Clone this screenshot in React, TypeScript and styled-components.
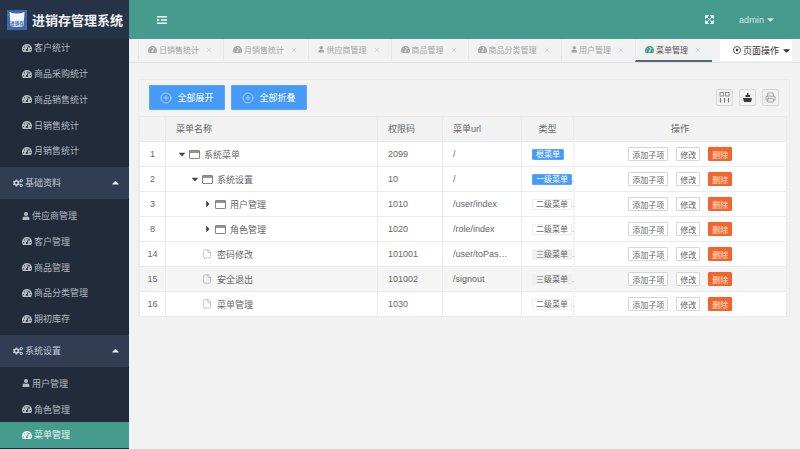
import React from 'react'
import styled, { createGlobalStyle } from 'styled-components'
import { FaCaretDown, FaCaretRight, FaCaretUp, FaCogs, FaTachometerAlt, FaUser, FaRegDotCircle } from 'react-icons/fa'
import { CirclePlus, Printer, File, X } from 'lucide-react'

const Global = createGlobalStyle`
	html, body {
		margin: 0;
		padding: 0;
		height: 100%;
		overflow: hidden;
		background: #f2f2f2;
		font-family: 'Liberation Sans', 'Noto Sans CJK SC', sans-serif;
	}
	* {
		box-sizing: border-box;
	}
`

const Page = styled.div`
	display: flex;
	width: 800px;
	height: 449px;
	overflow: hidden;
`

const Sidebar = styled.aside`
	flex: 0 0 129px;
	background: #212b3a;
	overflow: hidden;
	display: flex;
	flex-direction: column;
`

const Brand = styled.div`
	flex: 0 0 39px;
	display: flex;
	align-items: center;
	gap: 5px;
	padding-left: 7px;
	background: #263246;
	color: #eef1f4;
	font-size: 13px;
	font-weight: 700;
	white-space: nowrap;
	position: relative;
	z-index: 1;
`

const MenuScroll = styled.nav`
	margin-top: -4px;
`

const SubList = styled.div`
	padding: 0 0 3px;
	&:not(:first-child) {
		padding-top: 4px;
	}
`

const Item = styled.div<{ $active?: boolean }>`
	height: 25.75px;
	display: flex;
	align-items: center;
	gap: 2px;
	padding-left: 22px;
	font-size: 9px;
	color: ${(p) => (p.$active ? '#eef5f3' : '#b4bac2')};
	background: ${(p) => (p.$active ? '#459b8e' : 'transparent')};
`

const Group = styled.div`
	height: 32px;
	display: flex;
	align-items: center;
	gap: 2px;
	padding: 0 8px 0 13px;
	font-size: 9px;
	color: #c4cad2;
	background: #303d53;
	svg:last-child {
		margin-left: auto;
		color: #e8ebee;
	}
`

const Main = styled.main`
	flex: 1;
	min-width: 0;
	display: flex;
	flex-direction: column;
`

const Header = styled.header`
	flex: 0 0 39px;
	display: flex;
	align-items: center;
	padding: 0 24px 0 28px;
	background: #459b8e;
	color: #e6f1ef;
`

const HeaderRight = styled.div`
	margin-left: auto;
	display: flex;
	align-items: center;
	gap: 25px;
`

const UserMenu = styled.div`
	display: flex;
	align-items: center;
	gap: 1px;
	font-size: 9px;
	color: #d5e8e4;
	letter-spacing: 0.1px;
`

const TabBar = styled.div`
	flex: 0 0 23px;
	display: flex;
	padding-left: 9px;
	border-bottom: 1px solid #e4e4e4;
`

const Tab = styled.div<{ $active?: boolean }>`
	flex: none;
	display: flex;
	align-items: center;
	gap: 2px;
	height: 23px;
	padding: 0 10px 0 9px;
	font-size: 8px;
	white-space: nowrap;
	color: ${(p) => (p.$active ? '#555' : '#a3a3a3')};
	border-left: 1px solid #e8e8e8;
	border-bottom: 2px solid ${(p) => (p.$active ? '#5a6474' : 'transparent')};
	> svg:first-child {
		color: ${(p) => (p.$active ? '#459b8e' : '#a3a3a3')};
	}
	> svg:last-child {
		margin-left: 4px;
		color: #b9b9b9;
	}
`

const PageActions = styled.div`
	flex: none;
	margin: 0 8px 0 auto;
	width: 72px;
	height: 22px;
	padding-left: 13px;
	background: #fff;
	display: flex;
	align-items: center;
	gap: 2px;
	font-size: 9px;
	white-space: nowrap;
	color: #333;
`

const Body = styled.div`
	flex: 1;
	padding: 16px 10px 0 9px;
`

const Panel = styled.section`
	border: 1px solid #ececec;
	padding-right: 2px;
	border-bottom: none;
`

const Toolbar = styled.div`
	display: flex;
	align-items: center;
	gap: 6px;
	height: 36px;
	padding: 0 8px 1px 10px;
`

const PrimaryButton = styled.button`
	width: 76px;
	height: 25px;
	border: 1px solid #5aa7fa;
	border-radius: 1px;
	background: #469bf8;
	color: #fff;
	font: inherit;
	font-size: 9px;
	padding: 0;
	display: flex;
	align-items: center;
	justify-content: center;
	gap: 5px;
`

const Tools = styled.div`
	margin-left: auto;
	display: flex;
	gap: 6px;
`

const ToolButton = styled.div`
	width: 17px;
	height: 17px;
	border: 1px solid #d8d8d8;
	border-radius: 2px;
	display: flex;
	align-items: center;
	justify-content: center;
	color: #666;
`

const Table = styled.table`
	width: 647px;
	table-layout: fixed;
	border-collapse: collapse;
	font-size: 9px;
	color: #666;
	background: #fff;
`

const Th = styled.th<{ $center?: boolean; $width: number }>`
	width: ${(p) => p.$width}px;
	height: 25px;
	padding: 0 10px 2px;
	background: #f2f2f2;
	font-weight: 400;
	border: 1px solid #eaeaea;
	text-align: ${(p) => (p.$center ? 'center' : 'left')};
`

const Tr = styled.tr<{ $shade?: boolean }>`
	background: ${(p) => (p.$shade ? '#f5f5f5' : '#fff')};
`

const Td = styled.td`
	height: 25px;
	padding: 0 10px;
	border: 1px solid #ececec;
	white-space: nowrap;
	overflow: hidden;
	text-overflow: ellipsis;
`

const IndexCell = styled(Td)`
	padding: 0;
	text-align: center;
`

const TreeCell = styled.div<{ $level: number }>`
	display: flex;
	align-items: center;
	padding-left: ${(p) => p.$level * 13}px;
`

const Expander = styled.span`
	flex: 0 0 13px;
	display: flex;
	align-items: center;
	padding-left: 1px;
	color: #444;
`

const NodeIcon = styled.span`
	flex: 0 0 15px;
	display: flex;
	align-items: center;
	color: #777;
`

const TypeCell = styled(Td)`
	padding-right: 0;
	overflow: visible;
	border-right: 2px solid #f4f4f4;
`

const tagColors = {
	primary: { bg: '#469bf8', fg: '#fff', border: '#5aa7fa' },
	plain: { bg: '#fff', fg: '#666', border: '#eeeeee' },
	muted: { bg: '#f0f0f0', fg: '#666', border: '#f0f0f0' },
}

const Tag = styled.span<{ $kind: keyof typeof tagColors }>`
	display: inline-block;
	height: 11px;
	line-height: 9px;
	padding: 0 3px;
	font-size: 8px;
	border-radius: 1px;
	background: ${(p) => tagColors[p.$kind].bg};
	color: ${(p) => tagColors[p.$kind].fg};
	border: 1px solid ${(p) => tagColors[p.$kind].border};
`

const Dot = styled.span`
	font-size: 7px;
	color: #777;
`

const Actions = styled.div`
	display: flex;
	justify-content: center;
	gap: 8px;
`

const ActionButton = styled.span<{ $danger?: boolean }>`
	height: 14px;
	padding: 0 3px;
	display: flex;
	align-items: center;
	font-size: 8px;
	border-radius: 1px;
	border: 1px solid ${(p) => (p.$danger ? '#f3652d' : '#d6d6d6')};
	background: ${(p) => (p.$danger ? '#f3652d' : '#fff')};
	color: ${(p) => (p.$danger ? '#fbe3d8' : '#666')};
`

const Logo = () => (
	<svg width="20" height="20" viewBox="0 0 20 20">
		<rect width="20" height="20" fill="#3a69ad" />
		<path d="M2.5 2 Q10 5 17.5 2 L16.5 16 Q10 18 3.5 16 Z" fill="#f3f5f8" />
		<text x="10" y="14.5" fontSize="4.6" fill="#3a69ad" textAnchor="middle">进销存</text>
	</svg>
)

const SideToggle = () => (
	<svg width="10" height="8" viewBox="0 0 10 8" fill="#e6f1ef">
		<rect x="0" y="0" width="10" height="1.6" />
		<rect x="0" y="6.4" width="10" height="1.6" />
		<rect x="4" y="3.2" width="6" height="1.6" />
		<path d="M0 2.4 L3 4 L0 5.6 Z" />
	</svg>
)

const Expand = () => (
	<svg width="9" height="9" viewBox="0 0 9 9" fill="#eaf4f2" stroke="#eaf4f2">
		<path d="M0.5 3.5 V0.5 H3.5 Z M5.5 0.5 H8.5 V3.5 Z M8.5 5.5 V8.5 H5.5 Z M3.5 8.5 H0.5 V5.5 Z" />
		<path d="M2 2 L7 7 M7 2 L2 7" fill="none" strokeWidth="1" />
	</svg>
)

const Columns = () => (
	<svg width="11" height="11" viewBox="0 0 11 11" fill="none" stroke="#777" strokeWidth="0.8">
		<rect x="1" y="0.5" width="3.5" height="3.5" />
		<rect x="6.5" y="0.5" width="3.5" height="3.5" />
		<path d="M1.5 6 V10.5 M5.5 6 V10.5 M9.5 6 V10.5" strokeWidth="1.2" />
	</svg>
)

const Export = () => (
	<svg width="11" height="11" viewBox="0 0 11 11" fill="#3a3a3a">
		<path d="M5 1 H6.5 V3 H8 V5 H3.5 V3 H5 Z" />
		<path d="M1 6 H10 L9 10 H2 Z" />
	</svg>
)

const FolderIcon = () => (
	<svg width="11" height="9" viewBox="0 0 11 9" fill="none" stroke="#666" strokeWidth="0.8">
		<rect x="0.5" y="0.5" width="10" height="8" rx="0.5" />
		<path d="M0.5 2 H10.5" strokeWidth="1.4" />
	</svg>
)

const Gauge = () => <FaTachometerAlt size={10} />
const Person = () => <FaUser size={8} />

const firstGroup = ['客户统计', '商品采购统计', '商品销售统计', '日销售统计', '月销售统计']
const baseItems = [
	{ label: '供应商管理', user: true },
	{ label: '客户管理' },
	{ label: '商品管理' },
	{ label: '商品分类管理' },
	{ label: '期初库存' },
]

const tabs = [
	{ label: '日销售统计' },
	{ label: '月销售统计' },
	{ label: '供应商管理', user: true },
	{ label: '商品管理' },
	{ label: '商品分类管理' },
	{ label: '用户管理', user: true },
	{ label: '菜单管理', active: true },
]

type Row = {
	id: number
	name: string
	code: string
	url: string
	level: number
	node: 'open' | 'closed' | 'leaf'
	tag: string
	kind: keyof typeof tagColors
	more?: boolean
}

const rows: Row[] = [
	{ id: 1, name: '系统菜单', code: '2099', url: '/', level: 0, node: 'open', tag: '根菜单', kind: 'primary' },
	{ id: 2, name: '系统设置', code: '10', url: '/', level: 1, node: 'open', tag: '一级菜单', kind: 'primary', more: true },
	{ id: 3, name: '用户管理', code: '1010', url: '/user/index', level: 2, node: 'closed', tag: '二级菜单', kind: 'plain', more: true },
	{ id: 8, name: '角色管理', code: '1020', url: '/role/index', level: 2, node: 'closed', tag: '二级菜单', kind: 'plain', more: true },
	{ id: 14, name: '密码修改', code: '101001', url: '/user/toPassword', level: 1, node: 'leaf', tag: '三级菜单', kind: 'muted', more: true },
	{ id: 15, name: '安全退出', code: '101002', url: '/signout', level: 1, node: 'leaf', tag: '三级菜单', kind: 'muted', more: true },
	{ id: 16, name: '菜单管理', code: '1030', url: '', level: 1, node: 'leaf', tag: '二级菜单', kind: 'plain', more: true },
]

export default function App() {
	return (
		<Page>
			<Global />
			<Sidebar>
				<Brand>
					<Logo />
					进销存管理系统
				</Brand>
				<MenuScroll>
					<SubList>
						{firstGroup.map((label) => (
							<Item key={label}>
								<Gauge />
								{label}
							</Item>
						))}
					</SubList>
					<Group>
						<FaCogs size={10} />
						基础资料
						<FaCaretUp size={11} />
					</Group>
					<SubList>
						{baseItems.map((item) => (
							<Item key={item.label}>
								{item.user ? <Person /> : <Gauge />}
								{item.label}
							</Item>
						))}
					</SubList>
					<Group>
						<FaCogs size={10} />
						系统设置
						<FaCaretUp size={11} />
					</Group>
					<SubList>
						<Item>
							<Person />
							用户管理
						</Item>
						<Item>
							<Gauge />
							角色管理
						</Item>
						<Item $active>
							<Gauge />
							菜单管理
						</Item>
					</SubList>
				</MenuScroll>
			</Sidebar>
			<Main>
				<Header>
					<SideToggle />
					<HeaderRight>
						<Expand />
						<UserMenu>
							admin
							<FaCaretDown size={11} />
						</UserMenu>
					</HeaderRight>
				</Header>
				<TabBar>
					{tabs.map((tab) => (
						<Tab key={tab.label} $active={tab.active}>
							{tab.user ? <FaUser size={6.5} /> : <FaTachometerAlt size={9} />}
							{tab.label}
							<X size={8} strokeWidth={1.2} />
						</Tab>
					))}
					<PageActions>
						<FaRegDotCircle size={8} />
						页面操作
						<FaCaretDown size={11} />
					</PageActions>
				</TabBar>
				<Body>
					<Panel>
						<Toolbar>
							<PrimaryButton>
								<CirclePlus size={12} strokeWidth={1} />
								全部展开
							</PrimaryButton>
							<PrimaryButton>
								<CirclePlus size={12} strokeWidth={1} />
								全部折叠
							</PrimaryButton>
							<Tools>
								<ToolButton>
									<Columns />
								</ToolButton>
								<ToolButton>
									<Export />
								</ToolButton>
								<ToolButton>
									<Printer size={11} strokeWidth={1.2} />
								</ToolButton>
							</Tools>
						</Toolbar>
						<Table>
							<thead>
								<tr>
									<Th $width={26} />
									<Th $width={212}>菜单名称</Th>
									<Th $width={65}>权限码</Th>
									<Th $width={79}>菜单url</Th>
									<Th $width={52} $center>类型</Th>
									<Th $width={213} $center>操作</Th>
								</tr>
							</thead>
							<tbody>
								{rows.map((row) => (
									<Tr key={row.id} $shade={row.id === 15}>
										<IndexCell>{row.id}</IndexCell>
										<Td>
											<TreeCell $level={row.level}>
												<Expander>
													{row.node === 'open' && <FaCaretDown size={10} />}
													{row.node === 'closed' && <FaCaretRight size={10} />}
												</Expander>
												<NodeIcon>
													{row.node === 'leaf' ? <File size={10} strokeWidth={1} /> : <FolderIcon />}
												</NodeIcon>
												{row.name}
											</TreeCell>
										</Td>
										<Td>{row.code}</Td>
										<Td>{row.url}</Td>
										<TypeCell>
											<Tag $kind={row.kind}>{row.tag}</Tag>
											{row.more && <Dot>.</Dot>}
										</TypeCell>
										<Td>
											<Actions>
												<ActionButton>添加子项</ActionButton>
												<ActionButton>修改</ActionButton>
												<ActionButton $danger>删除</ActionButton>
											</Actions>
										</Td>
									</Tr>
								))}
							</tbody>
						</Table>
					</Panel>
				</Body>
			</Main>
		</Page>
	)
}
